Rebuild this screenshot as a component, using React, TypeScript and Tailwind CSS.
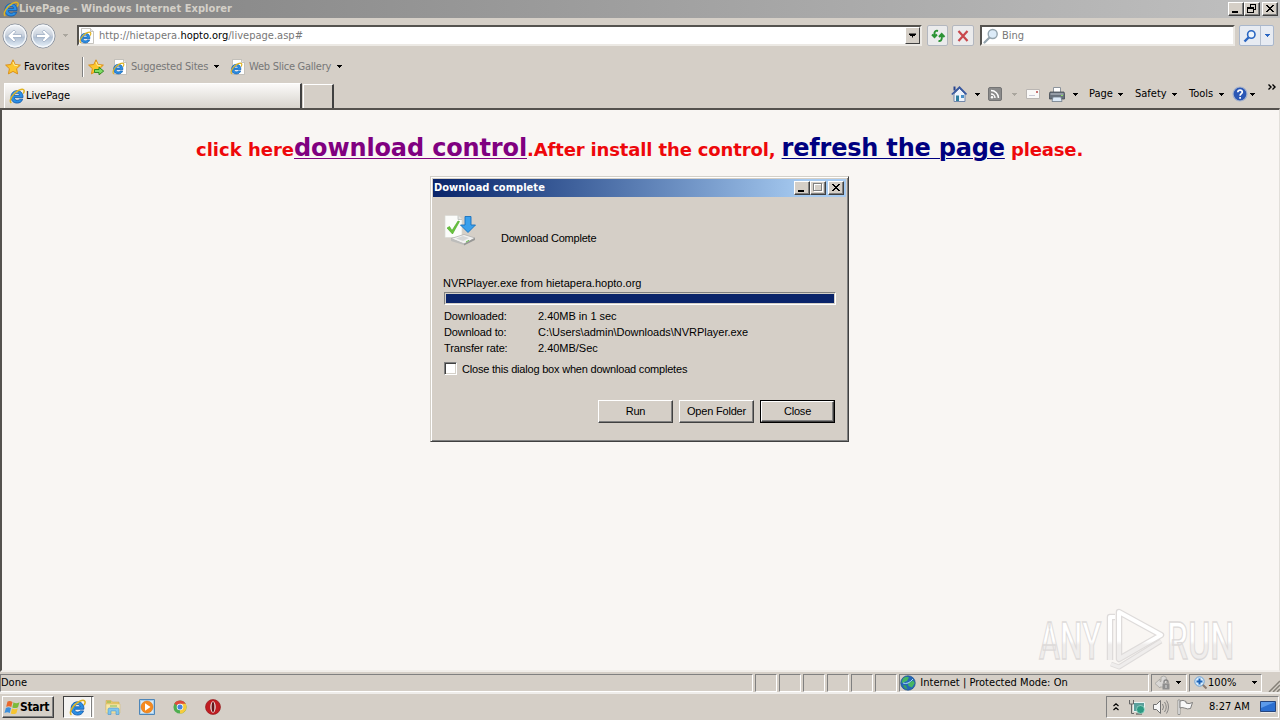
import React from 'react';

interface IconProps {
    className?: string;
}

const IeGlyph = () => (
    <g fill="none">
        <path d="M14 9.600H5.300c.2 1.900 1.400 2.700 2.900 2.700 1.100 0 1.800-.4 2.300-1.100h3.200c-.8 2.500-2.900 3.900-5.500 3.900-3.700 0-6.200-2.400-6.200-6.100C2 5.200 4.500 2.700 8.100 2.700c3.900 0 6.100 2.700 5.900 6.900zM5.300 7.400h5.300C10.400 6 9.400 5.200 8 5.200 6.500 5.200 5.500 6 5.300 7.400z" fill="#2a8fe4" stroke="#0f55a6" strokeWidth="0.800" />
        <path d="M4.500 6Q6 3.800 9 3.800" stroke="#8fd0ff" strokeWidth="1" />
        <path d="M2.300 15C.2 13.500 1.800 9 5.200 5.700 8.700 2.200 13 .3 14.600 1.700c.9.800.5 2.500-.4 4" stroke="#dfb321" strokeWidth="1.500" />
    </g>
);

const IeIcon: React.FC<IconProps> = ({ className = 'w-4 h-4' }) => (
    <svg viewBox="0 0 16 16" className={`shrink-0 ${className}`}>
        <IeGlyph />
    </svg>
);

const PageIcon = () => (
    <svg viewBox="0 0 16 16" className="w-4 h-4 shrink-0">
        <path d="M2.500.5h9l3 3v12h-12z" fill="#fff" stroke="#b9b6b0" strokeWidth="0.8" />
        <path d="M11.500.5v3h3" fill="#e8e8e8" stroke="#b9b6b0" strokeWidth="0.8" />
        <g transform="translate(0 3.200) scale(.78)">
            <IeGlyph />
        </g>
    </svg>
);

const Arrow: React.FC<IconProps> = ({ className = 'text-black' }) => (
    <svg viewBox="0 0 5 3" className={`w-[5px] h-[3px] shrink-0 ${className}`} shapeRendering="crispEdges">
        <path d="M0 0h5v1H4v1H3v1H2V2H1V1H0z" fill="currentColor" />
    </svg>
);

const Star: React.FC<{ add?: boolean }> = ({ add }) => (
    <svg viewBox="0 0 16 16" className="w-4 h-4 shrink-0">
        <path d="M8 .8l2.200 4.700 5.200.6-3.800 3.600 1 5.200L8 12.400l-4.600 2.500 1-5.200L.6 6.100l5.200-.6z" fill="#fcc62e" stroke="#d98a12" strokeWidth="0.900" />
        <path d="M8 3l1.400 3.300 3.400.4" fill="none" stroke="#fff0a0" />
        {add && <path d="M6.500 10.500h4.500v-2.300l4.700 3.900-4.700 3.700v-2.300H6.500z" fill="#7fdc65" stroke="#25831b" strokeWidth="0.900" />}
    </svg>
);

const NavCircle: React.FC<{ flip?: boolean }> = ({ flip }) => (
    <svg viewBox="0 0 26 26" className={`w-[26px] h-[26px] shrink-0 ${flip ? '-scale-x-100' : ''}`}>
        <defs>
            <linearGradient id="nav" x2="0" y2="1">
                <stop stopColor="#f4f6f9" />
                <stop offset=".5" stopColor="#c6cfdb" />
                <stop offset=".55" stopColor="#b0bfd2" />
                <stop offset="1" stopColor="#eaf4fc" />
            </linearGradient>
        </defs>
        <circle cx="13" cy="13" r="12" fill="url(#nav)" stroke="#8b929d" />
        <circle cx="13" cy="13" r="10.800" fill="none" stroke="#f5f8fb" strokeWidth="1.300" />
        <path d="M5.500 13l6.500-6 1.800 1.800-2.700 2.700h8.400v3h-8.400l2.700 2.700L12 19z" fill="#fff" stroke="#94a5bd" strokeWidth="0.700" />
    </svg>
);

const Magnifier: React.FC<{ color: string }> = ({ color }) => (
    <svg viewBox="0 0 16 16" className="w-4 h-4 shrink-0" fill="none">
        <path d="M6.300 9.700L1.500 14.500" stroke={color} strokeWidth="2.200" strokeLinecap="round" />
        <circle cx="9.700" cy="6" r="4.500" fill="#dcebf8" stroke={color} strokeWidth="1.400" />
    </svg>
);

const WinButton: React.FC<{ kind: 'min' | 'max' | 'restore' | 'close' }> = ({ kind }) => (
    <div className="w-4 h-[14px] bg-[#d5cfc7] border border-t-white border-l-white border-r-[#404040] border-b-[#404040] shadow-[inset_-1px_-1px_0_#808080] shrink-0">
        <svg viewBox="0 0 14 12" className="w-[14px] h-3" shapeRendering="crispEdges" fill="none">
            {kind === 'min' && <path d="M3 9h6" stroke="#000" strokeWidth="2" />}
            {kind === 'max' && (
                <>
                    <path d="M3 2.500h9M3.500 2v8M11.500 2v8M3 9.500h9" stroke="#fff" />
                    <path d="M2 1.500h9M2.500 1v8M10.500 1v8M2 8.500h9" stroke="#808080" />
                </>
            )}
            {kind === 'restore' && (
                <>
                    <path d="M5 1h6M5.500 1v3M10.500 1v5M9 6.500h2" stroke="#000" />
                    <path d="M3 4.500h6M2.500 4v6M8.500 4v6M2 9.500h7M3 5h6" stroke="#000" />
                </>
            )}
            {kind === 'close' && <path d="M3 2h2v1h1v1h2V3h1V2h2v1h-1v1H9v1H8v1h1v1h1v1h1v1H9V8H8V7H6v1H5v1H3V8h1V7h1V6h1V5H5V4H4V3H3z" fill="#000" />}
        </svg>
    </div>
);

const HomeIcon = () => (
    <svg viewBox="0 0 16 16" className="w-4 h-4 shrink-0">
        <path d="M3 8v7.500h11V8L8.500 2.500z" fill="#eef3fb" stroke="#7489ab" />
        <path d="M.8 8.500L8.500 1.300l7 7.200" fill="none" stroke="#3858a0" strokeWidth="1.700" />
        <path d="M2.500.5h2v4h-2z" fill="#28458e" />
        <path d="M5 9.500h3V15H5z" fill="#2f7fa0" />
        <path d="M10 9h3v3h-3z" fill="#4a90c8" />
    </svg>
);

const RssIcon = () => (
    <svg viewBox="0 0 14 14" className="w-[14px] h-[14px] shrink-0" fill="none">
        <rect x=".5" y=".5" width="13" height="13" rx="1.500" fill="#8b8b8b" stroke="#747474" />
        <path d="M3 7a4 4 0 014 4M3 3.500A7.500 7.500 0 0110.500 11" stroke="#fff" strokeWidth="1.500" />
        <circle cx="4" cy="10.200" r="1.200" fill="#fff" />
    </svg>
);

const MailIcon = () => (
    <svg viewBox="0 0 14 10" className="w-[14px] h-[10px] shrink-0">
        <path d="M.5.500h13v9H.5z" fill="#faf9f8" stroke="#bab6b3" />
        <path d="M10 2h2v2h-2z" fill="#c87373" />
        <path d="M3 6.500h6" stroke="#c9c9d6" />
    </svg>
);

const PrinterIcon = () => (
    <svg viewBox="0 0 16 15" className="w-4 h-[15px] shrink-0">
        <path d="M4.500.500h7v5h-7z" fill="#fff" stroke="#8d949c" />
        <path d="M1 5h14l.5 2v5H.5V7z" fill="#68717c" stroke="#444b54" strokeWidth="0.800" />
        <path d="M1.500 7h13" stroke="#c2c9d1" />
        <path d="M4 10h8l1 4.500H3z" fill="#dceaf8" stroke="#6f7b88" strokeWidth="0.800" />
        <path d="M12 8.500h2" stroke="#8be05f" />
    </svg>
);

const HelpIcon = () => (
    <svg viewBox="0 0 16 16" className="w-4 h-4 shrink-0" fill="none">
        <circle cx="8" cy="8" r="7" fill="#2b57b5" stroke="#a6b3cd" strokeWidth="1.200" />
        <path d="M5.800 6.300C5.900 3.200 10.500 3.400 10.300 6.200 10.200 7.600 8.100 7.800 8.100 9.800M8.100 11v1.800" stroke="#fff" strokeWidth="1.700" />
    </svg>
);

const DownloadIcon = () => (
    <svg viewBox="0 0 34 32" className="w-[34px] h-8 shrink-0">
        <path d="M2 .5h13l4 4v18H2z" fill="#fbfcfa" stroke="#dadad4" strokeWidth="0.700" />
        <path d="M15 .5v4h4" fill="#e3e5e2" stroke="#b5b8b5" strokeWidth="0.700" />
        <path d="M4 13l2.500-1.500L9 15.500 15 6l1.500.5L9.500 19z" fill="#68c43c" stroke="#46a324" strokeWidth="0.600" />
        <path d="M8 23.500l13-4 11 3.500-11 6z" fill="#f1f1f0" stroke="#aaa" strokeWidth="0.700" />
        <path d="M8 23.500V26l13 4v-1.500z" fill="#bdbdbb" />
        <path d="M21 28.800l11-6V25l-11 5.500z" fill="#989896" />
        <path d="M13 23.500l7-2.500 6 2-6 3z" fill="#d5d6d6" />
        <path d="M23 27l3-1.700" stroke="#63c24a" />
        <path d="M22 1.500h6v8.500h4.500L25 17.500 17.500 10H22z" fill="#3aa0ec" stroke="#1670be" strokeWidth="0.900" />
    </svg>
);

const FlagLogo = () => (
    <svg viewBox="0 0 16 15" className="w-4 h-[15px] shrink-0">
        <path d="M3.500 1.500Q6 .2 8.500 2L7.300 7Q5 5.500 2.200 6.800z" fill="#e9682c" />
        <path d="M9.500 2.300Q12 4 15.500 2.300L14 7.200Q11 8.800 8.300 7.400z" fill="#7cba3b" />
        <path d="M1.900 7.900Q4.700 6.600 7 8.100L5.800 13Q3.500 11.500.5 12.900z" fill="#3c8fdc" />
        <path d="M8 8.500Q10.700 10 13.700 8.400L12.400 13.200Q9.500 14.900 6.800 13.400z" fill="#f6c431" />
    </svg>
);

const ExplorerIcon = () => (
    <svg viewBox="0 0 16 16" className="w-4 h-4">
        <path d="M1 3V1.500h5L7.500 3h6.500v8H1z" fill="#e8c868" stroke="#caa54a" strokeWidth="0.500" />
        <path d="M1 5h14v9H1z" fill="#f8e8a6" stroke="#d6bb66" strokeWidth="0.500" />
        <path d="M5 7h7M2 3h4" stroke="#7ebb57" />
        <path d="M3 15.500V10.500q0-1.500 1.500-1.500h8q1.500 0 1.500 1.500v5h-3V12H6v3.500z" fill="#7fc5ee" stroke="#4a94c6" strokeWidth="0.600" />
    </svg>
);

const PlayerIcon = () => (
    <svg viewBox="0 0 16 16" className="w-4 h-4">
        <path d="M.5.500h15v15H.5z" fill="#a9d0ef" stroke="#4e86b8" />
        <path d="M2 2h12v12H2z" fill="#d8ebf8" />
        <circle cx="8" cy="8" r="6" fill="#f58a1f" stroke="#d46d0b" strokeWidth="0.500" />
        <path d="M6 4.300L11.500 8 6 11.700z" fill="#fff" />
    </svg>
);

const ChromeIcon = () => (
    <svg viewBox="0 0 16 16" className="w-[14px] h-[14px]">
        <circle cx="8" cy="8" r="7.500" fill="#4fae50" />
        <path d="M8 8L1.500 4.200A7.500 7.500 0 0114.500 4.300z" fill="#df4a3c" />
        <path d="M8 8V4.300h6.500A7.500 7.500 0 018 15.500z" fill="#f6cb3c" />
        <circle cx="8" cy="8" r="3.700" fill="#fff" />
        <circle cx="8" cy="8" r="2.900" fill="#4584dd" />
    </svg>
);

const OperaIcon = () => (
    <svg viewBox="0 0 16 16" className="w-4 h-4">
        <circle cx="8" cy="8" r="7.500" fill="#c01d22" stroke="#8d1014" strokeWidth="0.600" />
        <ellipse cx="8" cy="8" rx="2.700" ry="5.800" fill="#eee5e2" />
        <ellipse cx="8" cy="8" rx="1.400" ry="5" fill="#64161a" />
    </svg>
);

const GlobeIcon = () => (
    <svg viewBox="0 0 16 16" className="w-4 h-4 shrink-0">
        <circle cx="8" cy="8" r="7.300" fill="#2467b8" stroke="#194b84" strokeWidth="0.600" />
        <path d="M3 3.500Q6 .5 9 2.500L7 6 3.500 7.500 1.500 8zM8 8.500l5-3 1.800 2.500L12 12.500 8.500 11z" fill="#46b663" />
        <path d="M3 10l3 .5 1.500 4Q4 13.500 3 10z" fill="#39a05b" />
        <path d="M3 8q5 2 10-4" stroke="#a9dcf5" fill="none" />
    </svg>
);

const LockIcon = () => (
    <svg viewBox="0 0 18 16" className="w-[18px] h-4 shrink-0">
        <path d="M1 8.500L6 4v2.500h1V2q3-2 5 0l1 5-4 5H6v1z" fill="#d9d7d5" stroke="#a5a3a0" strokeWidth="0.800" />
        <path d="M10 8.500V7q0-2 2-2t2 2v1.500" fill="none" stroke="#858585" strokeWidth="1.300" />
        <path d="M8.500 8.500h7v6h-7z" fill="#8f8f8f" />
        <path d="M12 10v3" stroke="#ddd" />
    </svg>
);

const ZoomIcon = () => (
    <svg viewBox="0 0 14 14" className="w-[14px] h-[14px] shrink-0">
        <path d="M8.500 8.500l4 4" stroke="#8a7a70" strokeWidth="2" />
        <circle cx="5.500" cy="5.500" r="4.700" fill="#d8ecfc" stroke="#6aa0d4" />
        <path d="M5.500 2.500v6M2.500 5.500h6" stroke="#1c63b7" strokeWidth="2" />
    </svg>
);

const NetworkIcon = () => (
    <svg viewBox="0 0 16 16" className="w-4 h-4 shrink-0">
        <path d="M4.500 3.500h11v9h-11z" fill="#5b9f9b" stroke="#e9f3f2" />
        <path d="M7 15h6" stroke="#444" />
        <path d="M.5 1v4h4V1M2.500 5v9.500H5" fill="none" stroke="#666" />
        <circle cx="11.500" cy="10.500" r="4" fill="#2e9a83" stroke="#a9ded0" strokeWidth="0.700" />
    </svg>
);

const SpeakerIcon = () => (
    <svg viewBox="0 0 16 16" className="w-4 h-4 shrink-0" fill="none" stroke="#707070">
        <path d="M.5 5.500h3l4-4v13l-4-4h-3z" fill="#f6f6f6" />
        <path d="M9.500 5q2 3 0 6M11.500 3q3.500 5 0 10M13.500 1.500q4 6.500 0 13" strokeWidth="0.800" />
    </svg>
);

const FlagIcon = () => (
    <svg viewBox="0 0 16 16" className="w-4 h-4 shrink-0">
        <path d="M1 1h2v14.500H1z" fill="#fff" stroke="#777" strokeWidth="0.700" />
        <path d="M3 2q3-1.500 6 .5v1.500q3 1.500 6.500-.5l-2 6q-3 1-6-.5Q5 8 3 9z" fill="#f8f8f8" stroke="#666" strokeWidth="0.800" />
    </svg>
);

const Watermark = () => (
    <svg viewBox="0 0 210 64" className="w-[210px] h-16">
        <defs>
            <linearGradient id="mark" gradientUnits="userSpaceOnUse" x1="0" y1="16" x2="0" y2="54">
                <stop offset=".5" stopColor="#fff" />
                <stop offset=".6" stopColor="#efedec" />
            </linearGradient>
            <linearGradient id="letters" gradientUnits="userSpaceOnUse" x1="0" y1="-37" x2="0" y2="1">
                <stop offset=".5" stopColor="#fff" />
                <stop offset=".6" stopColor="#efedec" />
            </linearGradient>
        </defs>
        {/* condensed lettering either side of the play mark */}
        <g fontFamily="Roboto, sans-serif" fontSize="51" fontWeight="500" fill="url(#letters)" stroke="#dddad9" strokeWidth="1.300">
            <text transform="translate(3 53) scale(.62 1)">ANY</text>
            <text transform="translate(131 53) scale(.66 1)">RUN</text>
        </g>
        <g fill="none" strokeLinejoin="round">
            <path d="M83 6L125 29 83 53zM79 11h-5v43" stroke="#dedbda" strokeWidth="6.500" />
            <path d="M75 58l8 3 42-26" stroke="#dedbda" strokeWidth="5" />
            <path d="M83 6L125 29 83 53zM79 11h-5v43" stroke="url(#mark)" strokeWidth="4" />
            <path d="M75 58l8 3 42-26" stroke="#efedec" strokeWidth="3" />
        </g>
    </svg>
);

const dialogRows = [
    { label: 'Downloaded:', value: '2.40MB in 1 sec' },
    { label: 'Download to:', value: 'C:\\Users\\admin\\Downloads\\NVRPlayer.exe' },
    { label: 'Transfer rate:', value: '2.40MB/Sec' },
];

const DialogButton: React.FC<{ label: string; focused?: boolean }> = ({ label, focused }) => (
    <button className={`w-[75px] h-[23px] ${focused ? 'border border-black' : ''}`}>
        <span className="flex h-full items-center justify-center border border-t-white border-l-white border-r-[#404040] border-b-[#404040] shadow-[inset_-1px_-1px_0_#808080] pb-0.5 tracking-[-0.2px]">
            {label}
        </span>
    </button>
);

const DownloadDialog = () => (
    <div className="absolute left-[430px] top-[176px] w-[419px] h-[266px] flex flex-col bg-[#d5cfc7] p-px border border-t-[#d4d0c8] border-l-[#d4d0c8] border-r-[#404040] border-b-[#404040] shadow-[inset_1px_1px_0_#fff,inset_-1px_-1px_0_#808080] font-['Liberation_Sans',sans-serif] text-[11px] leading-4">
        <div className="m-px h-[18px] shrink-0 flex items-center bg-linear-to-r from-[#0a246a] to-[#a6caf0] to-90% pl-px pr-0.5 font-['DejaVu_Sans_Condensed',sans-serif] font-bold text-white">
            <span className="tracking-[0.04px]">Download complete</span>
            <div className="ml-auto flex">
                <WinButton kind="min" />
                <WinButton kind="max" />
                <div className="w-0.5" />
                <WinButton kind="close" />
            </div>
        </div>
        <div className="flex h-[77px] shrink-0 pl-[11px] pt-[17px]">
            <DownloadIcon />
            <span className="ml-6 pt-[15px] tracking-[-0.22px]">Download Complete</span>
        </div>
        <div className="pl-[11px] tracking-[0.01px]">NVRPlayer.exe from hietapera.hopto.org</div>
        <div className="ml-3 mt-px w-[392px] h-[13px] shrink-0 bg-[#0a246a] border border-t-[#808080] border-l-[#808080] border-r-white border-b-white shadow-[inset_0_0_0_1px_#d4d0c8]" />
        <div className="mt-[3px] pl-3">
            {dialogRows.map((row) => (
                <div key={row.label} className="flex h-4">
                    <span className="w-[94px] tracking-[-0.15px]">{row.label}</span>
                    <span className="tracking-[-0.02px]">{row.value}</span>
                </div>
            ))}
        </div>
        <div className="mt-[5px] flex items-center pl-3">
            <div className="mr-[5px] mb-px w-[13px] h-[13px] bg-white border border-t-[#808080] border-l-[#808080] border-r-white border-b-white shadow-[inset_1px_1px_0_#404040,inset_-1px_-1px_0_#d4d0c8]" />
            <span className="tracking-[-0.2px]">Close this dialog box when download completes</span>
        </div>
        <div className="mt-[23px] pr-3 flex justify-end gap-1.5">
            <DialogButton label="Run" />
            <DialogButton label="Open Folder" />
            <DialogButton label="Close" focused />
        </div>
    </div>
);

const TitleBar = () => (
    <div className="h-[18px] shrink-0 flex items-center bg-linear-to-r from-[#808080] to-[#c0c0c0] pl-[3px] pr-0.5 font-bold text-[#d4d0c8]">
        <IeIcon />
        <span className="tracking-[0.06px]">LivePage - Windows Internet Explorer</span>
        <div className="ml-auto flex">
            <WinButton kind="min" />
            <WinButton kind="restore" />
            <div className="w-0.5" />
            <WinButton kind="close" />
        </div>
    </div>
);

const AddressRow = () => (
    <div className="h-[35px] shrink-0 flex items-center pl-[2px] pr-[6px]">
        <div className="flex gap-0.5">
            <NavCircle />
            <NavCircle flip />
        </div>
        <div className="w-[19px] flex justify-center">
            <Arrow className="text-[#aaa69e]" />
        </div>
        <div className="ml-0.5 w-[845px] h-[21px] flex items-center bg-white border-2 border-t-[#55534f] border-l-[#55534f] border-r-[#ece9e4] border-b-[#ece9e4]">
            <PageIcon />
            <span className="ml-[4px] pt-px tracking-[0.02px] text-[#777]">http://hietapera.<span className="text-black">hopto.org</span>/livepage.asp#</span>
            <div className="ml-auto w-[15px] h-full bg-[#d5cfc7] flex items-center justify-center border border-t-white border-l-white border-r-[#404040] border-b-[#404040]">
                <Arrow className="scale-140" />
            </div>
        </div>
        <div className="ml-[5px] w-[21px] h-[21px] flex items-center justify-center rounded-xs border border-[#b3b7bf] bg-[#ebebec]">
            <svg viewBox="0 0 16 16" className="w-4 h-4" fill="none" stroke="#2c9335" strokeWidth="2">
                <path d="M8 3Q5 2 4.500 5v3M2 6.500L4.500 9 7 6.500M8.500 13q3 .5 3.300-3V7M9 9l2.700-3L14.500 9" />
            </svg>
        </div>
        <div className="ml-1 w-[22px] h-[21px] flex items-center justify-center rounded-xs border border-[#b3b7bf] bg-[#ebebec]">
            <svg viewBox="0 0 12 12" className="w-3 h-3" stroke="#c9474c" strokeWidth="2.200">
                <path d="M1.500 1l9 10M10.500 1l-9 10" />
            </svg>
        </div>
        <div className="ml-1.5 w-[255px] h-[21px] flex items-center bg-white border-2 border-t-[#55534f] border-l-[#55534f] border-r-[#ece9e4] border-b-[#ece9e4] pl-px text-[#777]">
            <Magnifier color="#94a4ae" />
            <span className="ml-[3px] pt-px">Bing</span>
        </div>
        <div className="ml-auto w-[35px] h-[21px] flex rounded-xs border border-[#a9b7cc] bg-[#e7ebf2]">
            <div className="w-[21px] flex items-center justify-center border-r border-[#b5bfce]">
                <svg viewBox="0 0 14 14" className="w-[14px] h-[14px]" fill="none" stroke="#2a66c2">
                    <path d="M5.500 8.500l-4 4" strokeWidth="2.400" />
                    <circle cx="8.300" cy="5.500" r="3.700" fill="#eef5fc" strokeWidth="1.600" />
                </svg>
            </div>
            <div className="flex-1 flex items-center justify-center">
                <Arrow className="text-[#2a66c2]" />
            </div>
        </div>
    </div>
);

const FavoritesRow = () => (
    <div className="h-[27px] shrink-0 flex items-center pl-[5px] text-[#777]">
        <Star />
        <span className="ml-[3px] w-[58px] tracking-[0.1px] text-black">Favorites</span>
        <div className="w-0.5 h-5 border-l border-l-[#808080] border-r border-r-white" />
        <div className="ml-[4px] flex items-center">
            <Star add />
            <div className="w-2" />
            <PageIcon />
            <span className="ml-[3px] w-[83px] tracking-[-0.18px] whitespace-nowrap">Suggested Sites</span>
            <Arrow />
            <div className="w-[11px]" />
            <PageIcon />
            <span className="ml-[3px] w-[88px] tracking-[-0.25px] whitespace-nowrap">Web Slice Gallery</span>
            <Arrow />
        </div>
    </div>
);

const TabRow = () => (
    <div className="h-[28px] shrink-0 flex items-end pl-1">
        <div className="w-[298px] h-[25px] flex items-center bg-linear-to-b from-[#fbfaf9] to-[#d8d4cd] border-l border-t border-white border-r-2 border-r-[#404040] pl-1">
            <IeIcon />
            <span className="ml-px">LivePage</span>
        </div>
        <div className="ml-px w-[31px] h-[24px] border-l border-t border-white border-r-2 border-r-[#404040]" />
        <div className="ml-auto self-start h-[28px] flex items-center pr-[4px]">
            <HomeIcon />
            <div className="w-2" />
            <Arrow />
            <div className="w-2" />
            <RssIcon />
            <div className="w-[10px]" />
            <Arrow className="text-[#aaa69e]" />
            <div className="w-[9px]" />
            <MailIcon />
            <div className="w-[9px]" />
            <PrinterIcon />
            <div className="w-2" />
            <Arrow />
            <span className="ml-[11px] w-[29px]">Page</span>
            <Arrow />
            <span className="ml-[12px] w-[37px]">Safety</span>
            <Arrow />
            <span className="ml-[12px] w-[30px]">Tools</span>
            <Arrow />
            <div className="w-2" />
            <HelpIcon />
            <div className="w-0.5" />
            <Arrow />
            <svg viewBox="0 0 8 6" className="ml-[13px] mb-3.5 w-2 h-1.5" fill="none" stroke="#000" strokeWidth="1.400">
                <path d="M.5.500L3 3 .5 5.500M4.500.500L7 3 4.500 5.500" />
            </svg>
        </div>
    </div>
);

const WebPage = () => (
    <div className="h-[564px] shrink-0 flex flex-col bg-[#f9f6f3] border-t-2 border-l-2 border-[#55524e] border-r border-r-[#e2dfda] border-b-2 border-b-[#f1eeea] font-['DejaVu_Sans',sans-serif]">
        <p className="mt-[22px] ml-[194px] h-8 leading-8 whitespace-nowrap font-bold text-[18px] tracking-[-0.14px] text-[#ee080b]">
            <span className="tracking-normal">click here</span>
            <a className="text-[24px] text-[#800080] underline decoration-1 underline-offset-2">download control</a>.After install the control,{' '}
            <a className="text-[24px] tracking-[-0.2px] text-[#000080] underline decoration-1 underline-offset-2">refresh the page</a> please.
        </p>
        <div className="mt-auto self-end mr-[33px]">
            <Watermark />
        </div>
    </div>
);

const sunken = 'h-[18px] flex items-center border border-t-[#808080] border-l-[#808080] border-r-white border-b-white';

const StatusBar = () => (
    <div className="h-[22px] shrink-0 flex items-center gap-0.5 pt-px border-b-2 border-b-[#efedea]">
        <div className={`${sunken} w-[754px]`}>Done</div>
        {[0, 1, 2, 3, 4, 5].map((i) => (
            <div key={i} className={`${sunken} w-[22px]`} />
        ))}
        <div className={`${sunken} w-[250px]`}>
            <GlobeIcon />
            <span className="ml-[4px] tracking-[0.02px]">Internet | Protected Mode: On</span>
        </div>
        <div className={`${sunken} w-[36px] pl-0.5`}>
            <LockIcon />
            <div className="w-[4px]" />
            <Arrow />
        </div>
        <div className={`${sunken} w-[73px] pl-[4px]`}>
            <ZoomIcon />
            <span className="w-[44px]">100%</span>
            <Arrow />
        </div>
        <svg viewBox="0 0 12 12" className="ml-1 mt-1.5 w-3 h-3">
            <path d="M1 12L12 1M5 12l7-7M9 12l3-3" stroke="#858178" strokeWidth="1.500" />
        </svg>
    </div>
);

const Taskbar = () => (
    <div className="flex-1 flex items-center pl-0.5 pr-px">
        <div className="w-[52px] h-[22px] flex items-center pl-px font-bold border border-t-white border-l-white border-r-[#404040] border-b-[#404040] shadow-[inset_-1px_-1px_0_#808080]">
            <FlagLogo />
            <span className="text-[12px] tracking-[-0.3px]">Start</span>
        </div>
        <div className="ml-[9px] w-[31px] h-[22px] flex bg-[#f4f3f1] border border-t-[#404040] border-l-[#404040] border-r-white border-b-white">
            <div className="w-[27px] flex items-center justify-center border-r border-r-white shadow-[1px_0_0_#808080]">
                <IeIcon className="w-[17px] h-[17px]" />
            </div>
        </div>
        <div className="ml-[11px] flex items-center gap-[18px]">
            <ExplorerIcon />
            <PlayerIcon />
            <ChromeIcon />
            <OperaIcon />
        </div>
        <div className="ml-auto w-[173px] h-[22px] flex items-center border border-t-[#808080] border-l-[#808080] border-r-white border-b-white pl-[6px]">
            <svg viewBox="0 0 6 8" className="w-1.5 h-2" fill="none" stroke="#000" strokeWidth="1.200">
                <path d="M.500 3L3 .8 5.500 3M.500 7L3 4.800 5.500 7" />
            </svg>
            <div className="ml-[10px] flex gap-2">
                <NetworkIcon />
                <SpeakerIcon />
                <FlagIcon />
            </div>
            <span className="ml-4 whitespace-nowrap">8:27 AM</span>
            <svg viewBox="0 0 16 14" className="ml-auto mr-[2px] w-4 h-[14px]">
                <path d="M.5 1.500h15v10H.5z" fill="#2c6fd0" stroke="#26457c" />
                <path d="M1 2h14L1 8z" fill="#5d9bea" />
                <path d="M1 12.500h14" stroke="#e9e9e9" />
            </svg>
        </div>
    </div>
);

export default function App() {
    return (
        <div className="relative w-[1280px] h-[720px] overflow-hidden flex flex-col bg-[#d5cfc7] font-['DejaVu_Sans_Condensed','DejaVu_Sans',sans-serif] text-[11px] leading-4 text-black">
            <TitleBar />
            <AddressRow />
            <FavoritesRow />
            <TabRow />
            <WebPage />
            <StatusBar />
            <Taskbar />
            <DownloadDialog />
        </div>
    );
}
